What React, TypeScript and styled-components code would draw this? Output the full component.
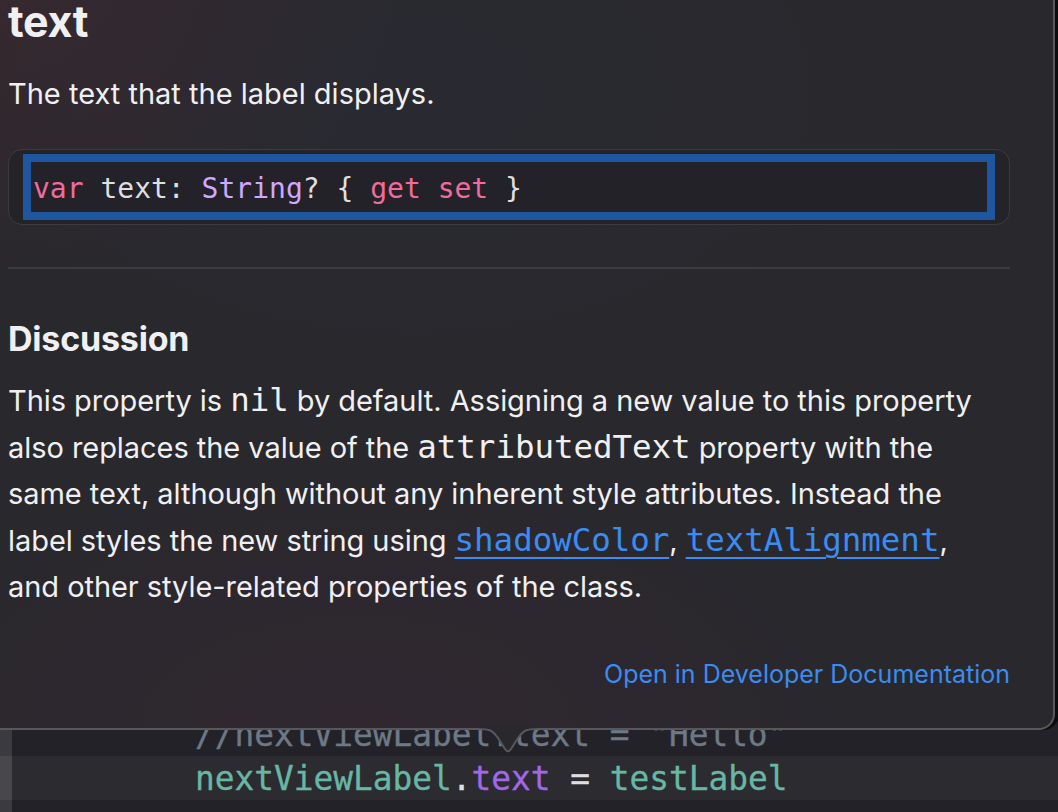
import React from 'react';
import styled, { createGlobalStyle } from 'styled-components';

const GlobalStyle = createGlobalStyle`
  html, body {
    margin: 0;
    padding: 0;
    height: 100%;
    background: #232228;
    overflow: hidden;
  }
  #root {
    height: 100%;
  }
`;

const sans = `Inter, "Noto Sans", "Liberation Sans", sans-serif`;
const mono = `"DejaVu Sans Mono", "Liberation Mono", monospace`;

const Page = styled.div`
  position: relative;
  width: 1058px;
  height: 812px;
  overflow: hidden;
  background: #232228;
`;

const Editor = styled.div`
  display: flex;
  flex-direction: column;
  padding-top: 712px;
`;

const Line = styled.div<{ $active?: boolean }>`
  display: flex;
  height: 44px;
  background: ${({ $active }) => ($active ? '#2b2b30' : '#232228')};
`;

const Gutter = styled.div<{ $active?: boolean }>`
  width: 12px;
  flex-shrink: 0;
  background: ${({ $active }) => ($active ? '#47474c' : '#3a3a3f')};
`;

const Code = styled.div`
  padding-left: 183px;
  padding-top: 1px;
  font-family: ${mono};
  font-size: 32.8px;
  line-height: 44px;
  white-space: pre;
  color: #dfdfe0;
  -webkit-text-stroke: 0.35px currentColor;
`;

const Tok = styled.span<{ $c: string }>`
  color: ${({ $c }) => $c};
`;

const Popover = styled.div`
  position: absolute;
  left: -20px;
  top: -20px;
  width: 1075px;
  height: 750px;
  box-sizing: border-box;
  padding: 17px 43px 0 26px;
  border: 2px solid #58585c;
  border-radius: 16px;
  background:
    radial-gradient(ellipse 420px 300px at 0% 0%, rgba(72, 40, 50, 0.45), transparent),
    radial-gradient(ellipse 500px 260px at 35% 100%, rgba(62, 38, 52, 0.35), transparent),
    radial-gradient(ellipse 500px 300px at 40% 15%, rgba(40, 48, 60, 0.25), transparent),
    #29282d;
  box-shadow: 4px 0 0 0 #0c0c0e;
  display: flex;
  flex-direction: column;
  font-family: ${sans};
  color: #f0f0f2;
`;

const Title = styled.h1`
  margin: 0;
  font-size: 43px;
  line-height: 44px;
  font-weight: 700;
  letter-spacing: -0.3px;
`;

const Abstract = styled.p`
  margin: 28px 0 0;
  font-size: 29px;
  line-height: 46px;
`;

const Declaration = styled.div`
  margin-top: 32px;
  height: 76px;
  box-sizing: border-box;
  padding: 4px 14px 5px;
  border: 1px solid #3c3b41;
  border-radius: 14px;
  background: #242328;
`;

const FocusRing = styled.div`
  height: 66px;
  box-sizing: border-box;
  border: 8px solid #1e56a0;
  background: #232228;
  padding: 4px 0 0 2px;
  font-family: ${mono};
  font-size: 28px;
  line-height: 46px;
  white-space: pre;
  color: #dfdfe0;
`;

const Divider = styled.hr`
  margin: 42px 0 0;
  border: none;
  height: 2px;
  background: #3c3b40;
`;

const Heading = styled.h2`
  margin: 50px 0 0;
  font-size: 34px;
  line-height: 40px;
  font-weight: 700;
  letter-spacing: -0.2px;
`;

const Paragraph = styled.p`
  margin: 18px 0 0;
  font-size: 29px;
  line-height: 46px;
  letter-spacing: -0.05px;
  white-space: nowrap;
`;

const InlineCode = styled.code`
  font-family: ${mono};
  font-size: 32.5px;
`;

const Link = styled.a`
  font-family: ${mono};
  font-size: 32.5px;
  color: #3a8cf2;
  text-decoration: underline;
  text-decoration-thickness: 2px;
  text-underline-offset: 6px;
`;

const DocLink = styled.a`
  margin-top: 49px;
  align-self: flex-end;
  font-size: 25px;
  line-height: 30px;
  color: #3a8cf2;
  text-decoration: none;
`;

const Arrow = styled.svg`
  position: absolute;
  left: 478px;
  top: 726px;
`;

const pink = '#f26b9d';
const purple = '#d0a8ff';

export default function App() {
  return (
    <>
      <GlobalStyle />
      <Page>
        <Editor>
          <Line>
            <Gutter />
            <Code>
              <Tok $c="#6c7986">//nextViewLabel.text = "Hello"</Tok>
            </Code>
          </Line>
          <Line $active>
            <Gutter $active />
            <Code>
              <Tok $c="#67b7a4">nextViewLabel</Tok>.<Tok $c="#a167e6">text</Tok> = <Tok $c="#67b7a4">testLabel</Tok>
            </Code>
          </Line>
          <Line>
            <Gutter />
            <Code> </Code>
          </Line>
        </Editor>

        <Popover>
          <Title>text</Title>
          <Abstract>The text that the label displays.</Abstract>
          <Declaration>
            <FocusRing>
              <Tok $c={pink}>var</Tok> text: <Tok $c={purple}>String</Tok>? {'{ '}
              <Tok $c={pink}>get</Tok> <Tok $c={pink}>set</Tok> {'}'}
            </FocusRing>
          </Declaration>
          <Divider />
          <Heading>Discussion</Heading>
          <Paragraph>
            This property is <InlineCode>nil</InlineCode> by default. Assigning a new value to this property
            <br />
            also replaces the value of the <InlineCode>attributedText</InlineCode> property with the
            <br />
            same text, although without any inherent style attributes. Instead the
            <br />
            label styles the new string using <Link>shadowColor</Link>, <Link>textAlignment</Link>,
            <br />
            and other style-related properties of the class.
          </Paragraph>
          <DocLink>Open in Developer Documentation</DocLink>
        </Popover>

        <Arrow width="60" height="30" viewBox="0 0 60 30">
          <path
            d="M0 0 H60 V4 C48 4 46 5 40 13 L33 24 Q30 28 27 24 L20 13 C14 5 12 4 0 4 Z"
            fill="#29282d"
          />
          <path
            d="M0 3 C12 3 14 4 20 12 L27 23 Q30 27.5 33 23 L40 12 C46 4 48 3 60 3"
            fill="none"
            stroke="#58585c"
            strokeWidth="2"
          />
        </Arrow>
      </Page>
    </>
  );
}
